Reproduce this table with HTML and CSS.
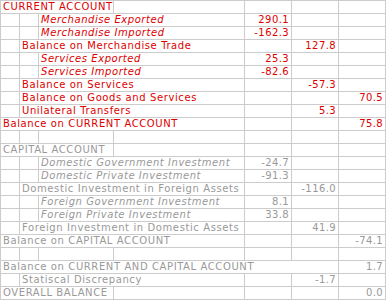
FILE: index.html
```html
<!DOCTYPE html>
<html>
<head>
<meta charset="utf-8">
<link rel="stylesheet" href="styles.css">
</head>
<body>
<table class="bop">
<colgroup>
<col class="c1"><col class="c2"><col class="c3"><col class="c4"><col class="c5"><col class="c6"><col class="c7">
</colgroup>
<tbody class="red">
<tr><td colspan="3">CURRENT ACCOUNT</td><td></td><td></td><td></td><td></td></tr>
<tr><td></td><td></td><td colspan="2" class="it">Merchandise Exported</td><td class="num">290.1</td><td></td><td></td></tr>
<tr><td></td><td></td><td colspan="2" class="it">Merchandise Imported</td><td class="num">-162.3</td><td></td><td></td></tr>
<tr><td></td><td colspan="3">Balance on Merchandise Trade</td><td></td><td class="num">127.8</td><td></td></tr>
<tr><td></td><td></td><td colspan="2" class="it">Services Exported</td><td class="num">25.3</td><td></td><td></td></tr>
<tr><td></td><td></td><td colspan="2" class="it">Services Imported</td><td class="num">-82.6</td><td></td><td></td></tr>
<tr><td></td><td colspan="3">Balance on Services</td><td></td><td class="num">-57.3</td><td></td></tr>
<tr><td></td><td colspan="3">Balance on Goods and Services</td><td></td><td></td><td class="num">70.5</td></tr>
<tr><td></td><td colspan="3">Unilateral Transfers</td><td></td><td class="num">5.3</td><td></td></tr>
<tr><td colspan="4">Balance on CURRENT ACCOUNT</td><td></td><td></td><td class="num">75.8</td></tr>
<tr><td></td><td></td><td></td><td></td><td></td><td></td><td></td></tr>
</tbody>
<tbody class="gray">
<tr><td colspan="3">CAPITAL ACCOUNT</td><td></td><td></td><td></td><td></td></tr>
<tr><td></td><td></td><td colspan="2" class="it">Domestic Government Investment</td><td class="num">-24.7</td><td></td><td></td></tr>
<tr><td></td><td></td><td colspan="2" class="it">Domestic Private Investment</td><td class="num">-91.3</td><td></td><td></td></tr>
<tr><td></td><td colspan="3">Domestic Investment in Foreign Assets</td><td></td><td class="num">-116.0</td><td></td></tr>
<tr><td></td><td></td><td colspan="2" class="it">Foreign Government Investment</td><td class="num">8.1</td><td></td><td></td></tr>
<tr><td></td><td></td><td colspan="2" class="it">Foreign Private Investment</td><td class="num">33.8</td><td></td><td></td></tr>
<tr><td></td><td colspan="3">Foreign Investment in Domestic Assets</td><td></td><td class="num">41.9</td><td></td></tr>
<tr><td colspan="4">Balance on CAPITAL ACCOUNT</td><td></td><td></td><td class="num">-74.1</td></tr>
<tr><td></td><td></td><td></td><td></td><td></td><td></td><td></td></tr>
<tr><td colspan="6">Balance on CURRENT AND CAPITAL ACCOUNT</td><td class="num">1.7</td></tr>
<tr><td></td><td colspan="3">Statiscal Discrepancy</td><td></td><td class="num">-1.7</td><td></td></tr>
<tr><td colspan="3">OVERALL BALANCE</td><td></td><td></td><td></td><td class="num">0.0</td></tr>
</tbody>
</table>
</body>
</html>
```
FILE: styles.css
```css
html, body {
  margin: 0;
  padding: 0;
  background: #ffffff;
}
.bop {
  border-collapse: collapse;
  table-layout: fixed;
  width: 385px;
  font-family: "DejaVu Sans", Verdana, sans-serif;
  font-size: 10px;
  letter-spacing: 0.6px;
}
.c1 { width: 19px; }
.c2 { width: 19px; }
.c3 { width: 75px; }
.c4 { width: 131px; }
.c5 { width: 47px; }
.c6 { width: 47px; }
.c7 { width: 47px; }
.bop td {
  border: 1px solid #cccccc;
  height: 12px;
  line-height: 12px;
  padding: 0 2px;
  white-space: nowrap;
  overflow: hidden;
}
.red td { color: #dd0000; }
.gray td { color: #999999; }
.bop td.it { font-style: italic; letter-spacing: 0.55px; }
.bop td.num { text-align: right; padding-right: 2px; letter-spacing: 0.4px; }
```
